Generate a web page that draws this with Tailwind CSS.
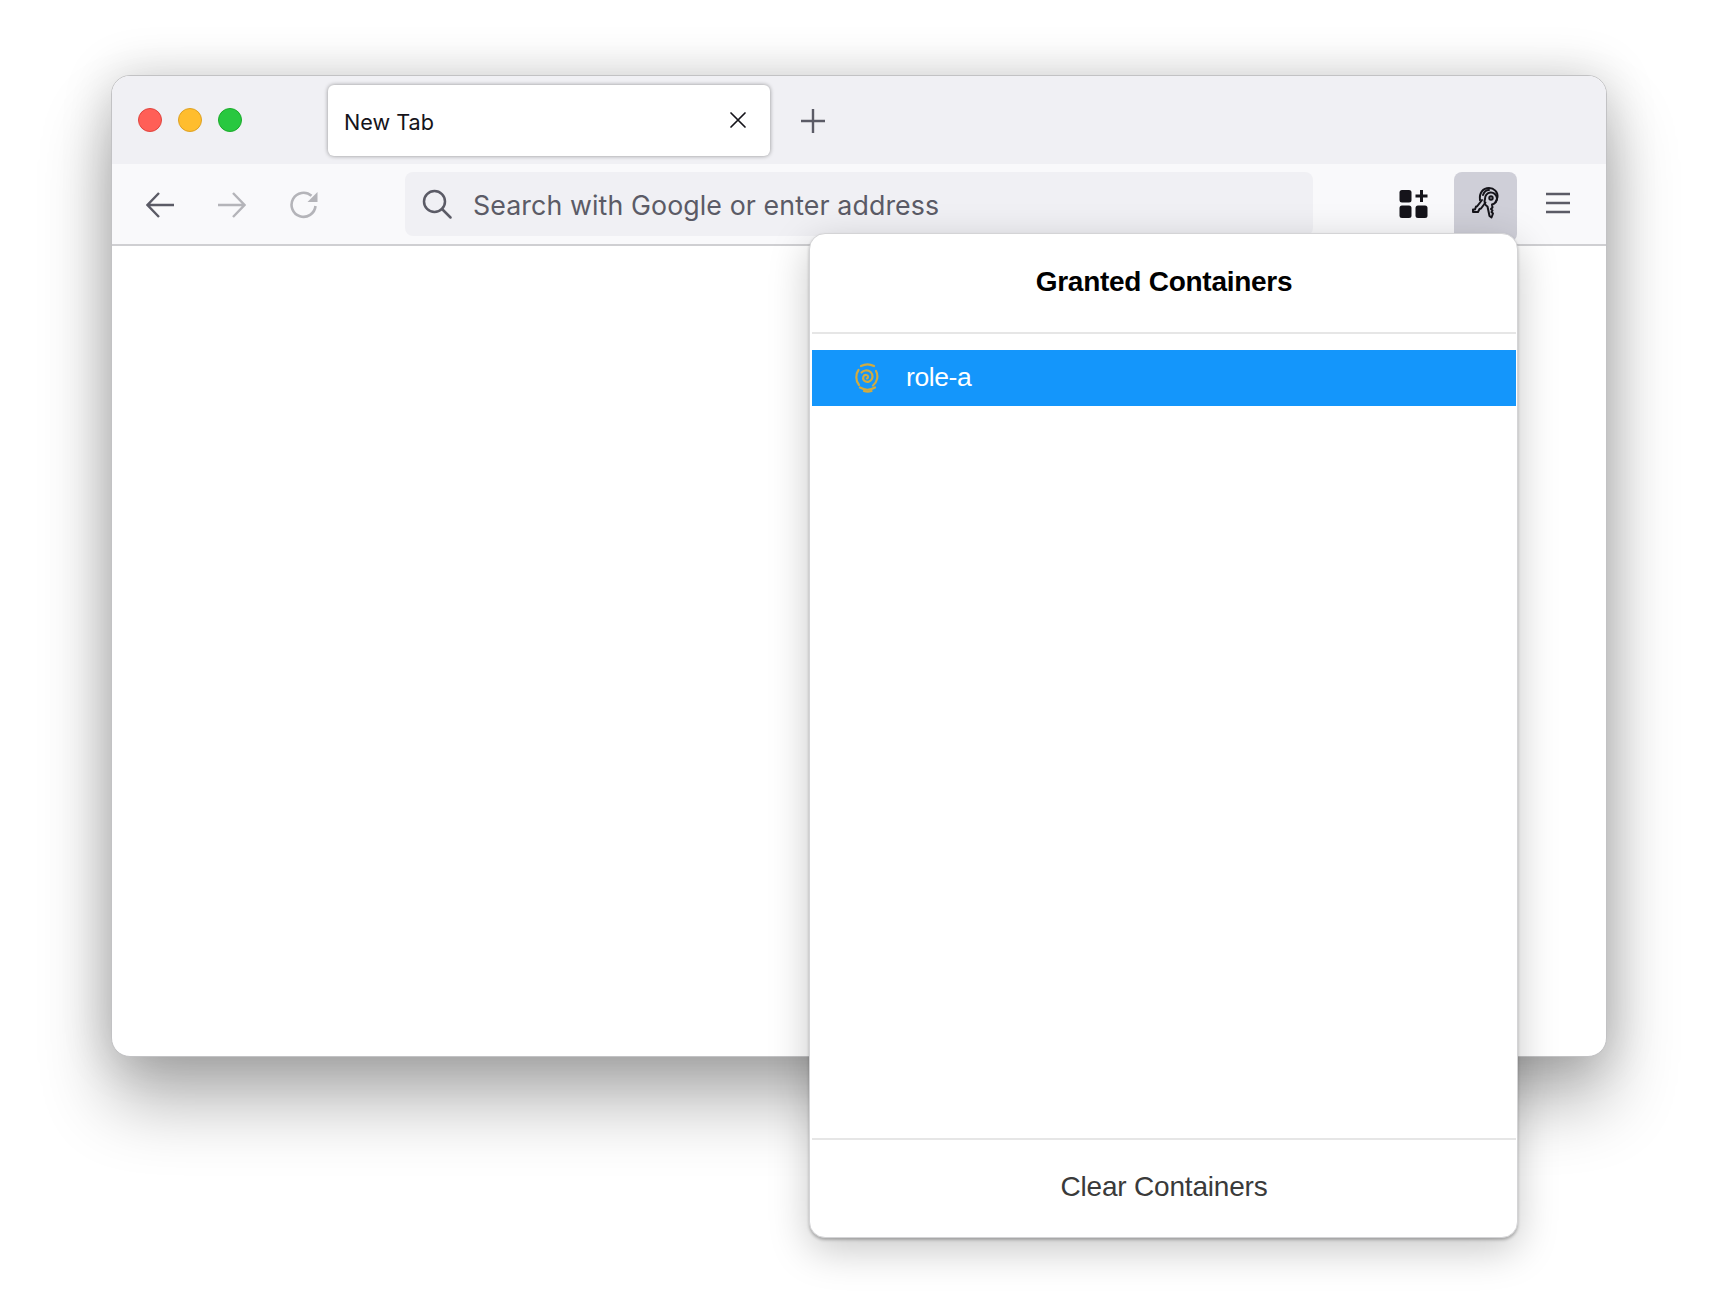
<!DOCTYPE html>
<html lang="en">
<head>
    <meta charset="UTF-8">
    <meta name="viewport" content="width=device-width, initial-scale=1.0">
    <title>Granted Containers</title>
    <script src="https://cdn.jsdelivr.net/npm/@tailwindcss/browser@4"></script>
</head>
<body class="bg-white w-[1718px] h-[1292px] overflow-hidden font-['Inter',sans-serif]">
    <div class="pt-[75px] pl-[111px]">
        <!-- Browser window -->
        <div class="relative w-[1496px] h-[982px] bg-white rounded-[19px] border border-[#c2c2c4] shadow-[0_45px_70px_rgba(0,0,0,0.3),0_0_50px_rgba(0,0,0,0.18)]">

            <!-- Tab strip -->
            <div class="h-[88px] bg-[#f0f0f4] rounded-t-[18px] flex items-center">
                <div class="flex gap-4 ml-[26px] w-[190px]">
                    <div class="w-6 h-6 rounded-full bg-[#ff5f57] border border-[#e0443e]"></div>
                    <div class="w-6 h-6 rounded-full bg-[#ffbd2e] border border-[#dea123]"></div>
                    <div class="w-6 h-6 rounded-full bg-[#28c840] border border-[#1aab29]"></div>
                </div>
                <div class="w-[442px] h-[71px] bg-white rounded-[6px] shadow-[0_0_4px_rgba(0,0,0,0.4)] flex items-center pl-[16px] pr-[23px]">
                    <span class="text-[21.6px] text-[#15141a] flex-1 mt-[4px]">New Tab</span>
                    <svg class="w-[18px] h-[18px] -mt-[1px]" viewBox="0 0 18 18" fill="none" stroke="#15141a" stroke-width="1.7" stroke-linecap="round"><path d="M2 2l14 14M16 2L2 16"/></svg>
                </div>
                <svg class="w-6 h-6 ml-[31px] mt-[1px]" viewBox="0 0 24 24" fill="none" stroke="#5b5b66" stroke-width="2.4"><path d="M12 0v24M0 12h24"/></svg>
            </div>

            <!-- Toolbar -->
            <div class="h-[82px] bg-[#f9f9fb] border-b-2 border-[#cfcfd2] flex items-start">
                <div class="flex items-center gap-[44px] pl-[34px] pt-[27px] w-[293px]">
                    <svg class="w-7 h-7" viewBox="0 0 28 28" fill="none" stroke="#5b5b66" stroke-width="2.4"><path d="M28 14H2M13 2L1.5 14 13 26"/></svg>
                    <svg class="w-7 h-7" viewBox="0 0 28 28" fill="none" stroke="#b4b4b9" stroke-width="2.4"><path d="M0 14h26M15 2l11.5 12L15 26"/></svg>
                    <svg class="w-7 h-7" viewBox="0 0 28 28" fill="none"><path d="M25.5 15a12 12 0 1 1-4-10.2" stroke="#b4b4b9" stroke-width="2.6"/><path d="M27.5 1v10h-10z" fill="#b4b4b9"/></svg>
                </div>
                <div class="w-[908px] h-[64px] mt-[8px] bg-[#f0f0f4] rounded-[8px] flex items-center pl-[17px]">
                    <svg class="w-[30px] h-[30px]" viewBox="0 0 30 30" fill="none" stroke="#5b5b66" stroke-width="2.5" stroke-linecap="round"><circle cx="12.5" cy="12.5" r="10.5"/><path d="M20 20l8.5 8.5"/></svg>
                    <span class="ml-[21px] mt-[2px] text-[26.75px] text-[#5b5b66] tracking-[0.1px]">Search with Google or enter address</span>
                </div>
                <div class="flex items-start">
                    <svg class="w-[30px] h-[30px] ml-[86px] mt-[25px]" viewBox="0 0 30 30" fill="#15141a">
                        <rect x="0.5" y="1" width="12" height="12.5" rx="2.5"/>
                        <rect x="0.5" y="16.5" width="12" height="12.5" rx="2.5"/>
                        <rect x="16.5" y="16.5" width="12" height="12.5" rx="2.5"/>
                        <path d="M21 1h3v4.5h4.500v3H24V13h-3V8.500h-4.500v-3H21z"/>
                    </svg>
                    <div class="w-[63px] h-[70px] ml-[25px] mt-[8px] rounded-[8px] bg-[#cfcfd8] flex justify-center pt-[15px]">
                        <svg class="w-[28px] h-[32px]" viewBox="0 0 28 32" fill="none" stroke="#15141a" stroke-width="2" stroke-linejoin="round" stroke-linecap="round">
                            <path d="M8 13C7 6 11 1 17 1c5 0 9 4 8.500 9-.2 2-1 3.500-2 5"/>
                            <path d="M11 8c1-3 3-5 6-5"/>
                            <path d="M10 13l-5 6.500-1 0-1 3H1v2.500h5l1.500-3 1.500-.5 4.500-6"/>
                            <path d="M13 12a6 6 0 1 1 7 5.500l.5 3-1.500 1.500 1.500 1.500-1 1.500 1.500 1.500-1.500 4-2-1.500-2-9.500A6 6 0 0 1 13 12z"/>
                            <circle cx="19" cy="11" r="1.700"/>
                        </svg>
                    </div>
                    <svg class="w-6 h-[22px] ml-[29px] mt-[28px]" viewBox="0 0 24 22" stroke="#5b5b66" stroke-width="2.400"><path d="M0 2h24M0 11h24M0 20h24"/></svg>
                </div>
            </div>

            <!-- Extension popup -->
            <div class="absolute left-[697px] top-[157px] w-[709px] h-[1005px] bg-white rounded-[16px] border border-[#d4d4d6] shadow-[0_2px_3px_rgba(0,0,0,0.25),0_12px_40px_rgba(0,0,0,0.22)] flex flex-col font-['Liberation_Sans',sans-serif] pl-[2px] pr-[1px]">
                <div class="h-[100px] shrink-0 border-b-2 border-[#e6e6e6] flex items-center justify-center">
                    <h1 class="text-[28px] font-bold text-black tracking-[-0.27px] -mt-[2px]">Granted Containers</h1>
                </div>
                <div class="flex-1 pt-[16px]">
                    <div class="h-[56px] bg-[#1496fb] flex items-center pl-[43px]">
                        <svg class="w-[24px] h-[30px]" viewBox="0 0 24 30" fill="none" stroke="#d2ab3f" stroke-width="2.200" stroke-linecap="round">
                            <path d="M6 3C10 1 15 1 19 3"/>
                            <path d="M3.500 7C.5 11 .5 18 4 22"/>
                            <path d="M12 15.500c1.500-.5 1.500-3-.5-3.500-3-.5-4.500 3-2.500 5.500 3 3 8 1 8.500-3.500.3-4-3-7-7-6.500-1.500.2-3 1-4 2"/>
                            <path d="M21 8c2.500 4.500 1.500 11-3 14.500"/>
                            <path d="M5 24.500c5 3 10 3 15 0"/>
                            <path d="M9 28c2.500.7 5 .7 7.500 0"/>
                        </svg>
                        <span class="ml-[27px] text-[26.500px] text-white tracking-[-0.4px]">role-a</span>
                    </div>
                </div>
                <div class="h-[99px] shrink-0 border-t-2 border-[#e6e6e6] flex items-center justify-center">
                    <span class="text-[28px] text-[#3a3a3a] tracking-[-0.2px] -mt-[3px]">Clear Containers</span>
                </div>
            </div>
        </div>
    </div>
</body>
</html>
